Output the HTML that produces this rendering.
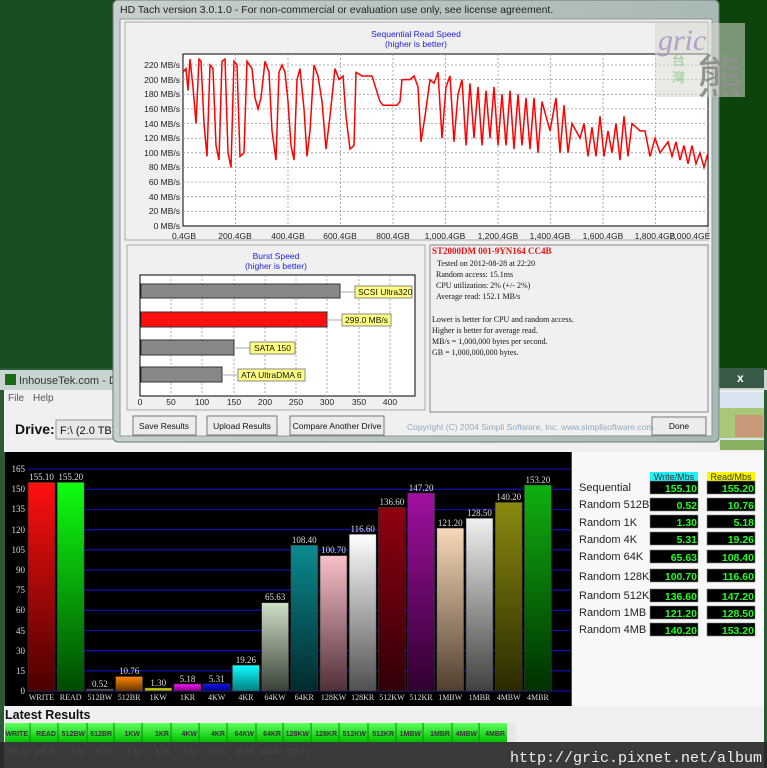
<!DOCTYPE html>
<html><head><meta charset="utf-8"><style>
html,body{margin:0;padding:0;background:#0c440c;}
svg{display:block}
</style></head><body>
<svg width="767" height="768" viewBox="0 0 767 768" xmlns="http://www.w3.org/2000/svg" font-family="Liberation Sans, sans-serif">
<defs>
<linearGradient id="g0" x1="0" y1="0" x2="0" y2="1"><stop offset="0" stop-color="#ff1010"/><stop offset="1" stop-color="#4a0000"/></linearGradient>
<linearGradient id="g1" x1="0" y1="0" x2="0" y2="1"><stop offset="0" stop-color="#10ff10"/><stop offset="1" stop-color="#004a00"/></linearGradient>
<linearGradient id="g2" x1="0" y1="0" x2="0" y2="1"><stop offset="0" stop-color="#777"/><stop offset="1" stop-color="#333"/></linearGradient>
<linearGradient id="g3" x1="0" y1="0" x2="0" y2="1"><stop offset="0" stop-color="#ff8800"/><stop offset="1" stop-color="#663300"/></linearGradient>
<linearGradient id="g4" x1="0" y1="0" x2="0" y2="1"><stop offset="0" stop-color="#ffff00"/><stop offset="1" stop-color="#888800"/></linearGradient>
<linearGradient id="g5" x1="0" y1="0" x2="0" y2="1"><stop offset="0" stop-color="#ff10ff"/><stop offset="1" stop-color="#800080"/></linearGradient>
<linearGradient id="g6" x1="0" y1="0" x2="0" y2="1"><stop offset="0" stop-color="#1010ff"/><stop offset="1" stop-color="#000080"/></linearGradient>
<linearGradient id="g7" x1="0" y1="0" x2="0" y2="1"><stop offset="0" stop-color="#10ffff"/><stop offset="1" stop-color="#008080"/></linearGradient>
<linearGradient id="g8" x1="0" y1="0" x2="0" y2="1"><stop offset="0" stop-color="#d0e0c8"/><stop offset="1" stop-color="#3a4238"/></linearGradient>
<linearGradient id="g9" x1="0" y1="0" x2="0" y2="1"><stop offset="0" stop-color="#0a8a90"/><stop offset="1" stop-color="#022a2c"/></linearGradient>
<linearGradient id="g10" x1="0" y1="0" x2="0" y2="1"><stop offset="0" stop-color="#f8c0c8"/><stop offset="1" stop-color="#503038"/></linearGradient>
<linearGradient id="g11" x1="0" y1="0" x2="0" y2="1"><stop offset="0" stop-color="#ffffff"/><stop offset="1" stop-color="#505050"/></linearGradient>
<linearGradient id="g12" x1="0" y1="0" x2="0" y2="1"><stop offset="0" stop-color="#900010"/><stop offset="1" stop-color="#300008"/></linearGradient>
<linearGradient id="g13" x1="0" y1="0" x2="0" y2="1"><stop offset="0" stop-color="#a010a0"/><stop offset="1" stop-color="#300030"/></linearGradient>
<linearGradient id="g14" x1="0" y1="0" x2="0" y2="1"><stop offset="0" stop-color="#f8d8b8"/><stop offset="1" stop-color="#504030"/></linearGradient>
<linearGradient id="g15" x1="0" y1="0" x2="0" y2="1"><stop offset="0" stop-color="#f0f0f0"/><stop offset="1" stop-color="#404040"/></linearGradient>
<linearGradient id="g16" x1="0" y1="0" x2="0" y2="1"><stop offset="0" stop-color="#8a8a10"/><stop offset="1" stop-color="#2a2a00"/></linearGradient>
<linearGradient id="g17" x1="0" y1="0" x2="0" y2="1"><stop offset="0" stop-color="#10b010"/><stop offset="1" stop-color="#003000"/></linearGradient>
<linearGradient id="tg" x1="0" y1="0" x2="0" y2="1"><stop offset="0" stop-color="#60ff60"/><stop offset="1" stop-color="#00c000"/></linearGradient>
<linearGradient id="frame" x1="0" y1="0" x2="1" y2="0"><stop offset="0" stop-color="#c8d0cc"/><stop offset="1" stop-color="#a8b8b4"/></linearGradient>
</defs>

<rect width="767" height="768" fill="#0c440c"/>
<rect x="0" y="0" width="113" height="370" fill="#184d22"/>

<!-- Inhouse window -->
<rect x="0" y="368" width="767" height="400" fill="#2c5a34"/>
<rect x="0" y="370" width="767" height="20" fill="#c8d4d0"/>
<rect x="718" y="368" width="46" height="20" fill="#3a5a48"/>
<text x="737" y="382" font-size="12" fill="#fff" font-weight="bold">x</text>
<rect x="5" y="374" width="11" height="11" fill="#1a6a1a"/>
<text x="19" y="384" font-size="11" fill="#333">InhouseTek.com - Disk</text>
<rect x="4" y="390" width="760" height="62" fill="#f0f0f0"/>
<text x="8" y="401" font-size="10" fill="#555">File</text>
<text x="33" y="401" font-size="10" fill="#555">Help</text>
<text x="15" y="434" font-size="14" font-weight="bold" fill="#111">Drive:</text>
<rect x="56" y="420" width="70" height="19" fill="#e8e8e8" stroke="#999"/>
<text x="60" y="434" font-size="11" fill="#111">F:\ (2.0 TB)</text>
<rect x="718" y="392" width="46" height="55" fill="#d8e4f0"/>
<rect x="720" y="408" width="44" height="30" fill="#a8c878"/>
<rect x="735" y="415" width="28" height="22" fill="#c89878"/>
<rect x="720" y="440" width="44" height="10" fill="#88b060"/>

<!-- black chart -->
<rect x="5" y="452" width="566" height="254" fill="#000"/>
<g stroke="#1010a0" stroke-width="1.3">
<line x1="28" y1="691" x2="571" y2="691"/><line x1="28" y1="670.8" x2="571" y2="670.8"/><line x1="28" y1="650.7" x2="571" y2="650.7"/><line x1="28" y1="630.5" x2="571" y2="630.5"/><line x1="28" y1="610.3" x2="571" y2="610.3"/><line x1="28" y1="590.2" x2="571" y2="590.2"/><line x1="28" y1="570" x2="571" y2="570"/><line x1="28" y1="549.8" x2="571" y2="549.8"/><line x1="28" y1="529.7" x2="571" y2="529.7"/><line x1="28" y1="509.5" x2="571" y2="509.5"/><line x1="28" y1="489.3" x2="571" y2="489.3"/><line x1="28" y1="469.1" x2="571" y2="469.1"/>
</g>
<g font-size="9" fill="#ddd" text-anchor="end" font-family="Liberation Serif, serif">
<text x="25" y="694">0</text><text x="25" y="674">15</text><text x="25" y="654">30</text><text x="25" y="634">45</text><text x="25" y="613">60</text><text x="25" y="593">75</text><text x="25" y="573">90</text><text x="25" y="553">105</text><text x="25" y="533">120</text><text x="25" y="512">135</text><text x="25" y="492">150</text><text x="25" y="472">165</text>
</g>
<g stroke="#333" stroke-width="0.6">
<rect x="28" y="482.4" width="27" height="208.6" fill="url(#g0)"/>
<rect x="57.2" y="482.3" width="27" height="208.7" fill="url(#g1)"/>
<rect x="86.4" y="689" width="27" height="2" fill="url(#g2)"/>
<rect x="115.6" y="676.5" width="27" height="14.5" fill="url(#g3)"/>
<rect x="144.8" y="688" width="27" height="3" fill="url(#g4)"/>
<rect x="174" y="684" width="27" height="7" fill="url(#g5)"/>
<rect x="203.2" y="683.9" width="27" height="7.1" fill="url(#g6)"/>
<rect x="232.4" y="665.1" width="27" height="25.9" fill="url(#g7)"/>
<rect x="261.6" y="602.7" width="27" height="88.3" fill="url(#g8)"/>
<rect x="290.8" y="545.2" width="27" height="145.8" fill="url(#g9)"/>
<rect x="320" y="555.6" width="27" height="135.4" fill="url(#g10)"/>
<rect x="349.2" y="534.2" width="27" height="156.8" fill="url(#g11)"/>
<rect x="378.4" y="507.3" width="27" height="183.7" fill="url(#g12)"/>
<rect x="407.6" y="493" width="27" height="198" fill="url(#g13)"/>
<rect x="436.8" y="528" width="27" height="163" fill="url(#g14)"/>
<rect x="466" y="518.2" width="27" height="172.8" fill="url(#g15)"/>
<rect x="495.2" y="502.4" width="27" height="188.6" fill="url(#g16)"/>
<rect x="524.4" y="485" width="27" height="206" fill="url(#g17)"/>
</g>
<g font-family="Liberation Serif, serif" font-size="9" fill="#ddd" text-anchor="middle">
<text x="41.5" y="480">155.10</text><text x="70.7" y="480">155.20</text><text x="99.9" y="687">0.52</text><text x="129.1" y="674">10.76</text><text x="158.3" y="686">1.30</text><text x="187.5" y="682">5.18</text><text x="216.7" y="682">5.31</text><text x="245.9" y="663">19.26</text><text x="275.1" y="600">65.63</text><text x="304.3" y="543">108.40</text><text x="333.5" y="553">100.70</text><text x="362.7" y="532">116.60</text><text x="391.9" y="505">136.60</text><text x="421.1" y="491">147.20</text><text x="450.3" y="526">121.20</text><text x="479.5" y="516">128.50</text><text x="508.7" y="500">140.20</text><text x="537.9" y="483">153.20</text>
</g>
<g font-family="Liberation Serif, serif" font-size="8" fill="#ddd" text-anchor="middle">
<text x="41.5" y="700">WRITE</text><text x="70.7" y="700">READ</text><text x="99.9" y="700">512BW</text><text x="129.1" y="700">512BR</text><text x="158.3" y="700">1KW</text><text x="187.5" y="700">1KR</text><text x="216.7" y="700">4KW</text><text x="245.9" y="700">4KR</text><text x="275.1" y="700">64KW</text><text x="304.3" y="700">64KR</text><text x="333.5" y="700">128KW</text><text x="362.7" y="700">128KR</text><text x="391.9" y="700">512KW</text><text x="421.1" y="700">512KR</text><text x="450.3" y="700">1MBW</text><text x="479.5" y="700">1MBR</text><text x="508.7" y="700">4MBW</text><text x="537.9" y="700">4MBR</text>
</g>

<!-- right results panel -->
<rect x="572" y="452" width="192" height="254" fill="#f8f8f8"/>
<rect x="650" y="472" width="48" height="10" fill="#20f0f8"/>
<rect x="707" y="472" width="48" height="10" fill="#f8f800"/>
<text x="674" y="480" font-size="9" fill="#333" text-anchor="middle">Write/Mbs</text>
<text x="731" y="480" font-size="9" fill="#333" text-anchor="middle">Read/Mbs</text>
<g font-size="11" fill="#222">
<text x="579" y="491">Sequential</text><text x="579" y="508">Random 512B</text><text x="579" y="526">Random 1K</text><text x="579" y="543">Random 4K</text><text x="579" y="560">Random 64K</text><text x="579" y="580">Random 128K</text><text x="579" y="599">Random 512K</text><text x="579" y="616">Random 1MB</text><text x="579" y="633">Random 4MB</text>
</g>
<g fill="#000" stroke="#888" stroke-width="0.6">
<rect x="650" y="481" width="48" height="13"/><rect x="707" y="481" width="48" height="13"/>
<rect x="650" y="498" width="48" height="13"/><rect x="707" y="498" width="48" height="13"/>
<rect x="650" y="515" width="48" height="13"/><rect x="707" y="515" width="48" height="13"/>
<rect x="650" y="532" width="48" height="13"/><rect x="707" y="532" width="48" height="13"/>
<rect x="650" y="550" width="48" height="13"/><rect x="707" y="550" width="48" height="13"/>
<rect x="650" y="569" width="48" height="13"/><rect x="707" y="569" width="48" height="13"/>
<rect x="650" y="589" width="48" height="13"/><rect x="707" y="589" width="48" height="13"/>
<rect x="650" y="606" width="48" height="13"/><rect x="707" y="606" width="48" height="13"/>
<rect x="650" y="623" width="48" height="13"/><rect x="707" y="623" width="48" height="13"/>
</g>
<g font-size="10.5" font-weight="bold" fill="#20ff20" text-anchor="end">
<text x="697" y="492">155.10</text><text x="754" y="492">155.20</text>
<text x="697" y="509">0.52</text><text x="754" y="509">10.76</text>
<text x="697" y="526">1.30</text><text x="754" y="526">5.18</text>
<text x="697" y="543">5.31</text><text x="754" y="543">19.26</text>
<text x="697" y="561">65.63</text><text x="754" y="561">108.40</text>
<text x="697" y="580">100.70</text><text x="754" y="580">116.60</text>
<text x="697" y="600">136.60</text><text x="754" y="600">147.20</text>
<text x="697" y="617">121.20</text><text x="754" y="617">128.50</text>
<text x="697" y="634">140.20</text><text x="754" y="634">153.20</text>
</g>

<!-- latest results -->
<rect x="4" y="706" width="760" height="62" fill="#f0f0f0"/>
<text x="5" y="719" font-size="12.5" font-weight="bold" fill="#111">Latest Results</text>
<rect x="5" y="723" width="502" height="19" fill="url(#tg)"/>
<g stroke="#0a8a0a" stroke-width="1"><line x1="30" y1="723" x2="30" y2="742"/><line x1="58" y1="723" x2="58" y2="742"/><line x1="87" y1="723" x2="87" y2="742"/><line x1="114" y1="723" x2="114" y2="742"/><line x1="142" y1="723" x2="142" y2="742"/><line x1="171" y1="723" x2="171" y2="742"/><line x1="199" y1="723" x2="199" y2="742"/><line x1="227" y1="723" x2="227" y2="742"/><line x1="256" y1="723" x2="256" y2="742"/><line x1="283" y1="723" x2="283" y2="742"/><line x1="311" y1="723" x2="311" y2="742"/><line x1="339" y1="723" x2="339" y2="742"/><line x1="368" y1="723" x2="368" y2="742"/><line x1="396" y1="723" x2="396" y2="742"/><line x1="423" y1="723" x2="423" y2="742"/><line x1="452" y1="723" x2="452" y2="742"/><line x1="479" y1="723" x2="479" y2="742"/></g>
<g font-size="7" font-weight="bold" fill="#333" text-anchor="end">
<text x="28" y="736">WRITE</text><text x="56" y="736">READ</text><text x="85" y="736">512BW</text><text x="112" y="736">512BR</text><text x="140" y="736">1KW</text><text x="169" y="736">1KR</text><text x="197" y="736">4KW</text><text x="225" y="736">4KR</text><text x="254" y="736">64KW</text><text x="281" y="736">64KR</text><text x="309" y="736">128KW</text><text x="337" y="736">128KR</text><text x="366" y="736">512KW</text><text x="394" y="736">512KR</text><text x="421" y="736">1MBW</text><text x="450" y="736">1MBR</text><text x="477" y="736">4MBW</text><text x="505" y="736">4MBR</text>
</g>
<rect x="508" y="723" width="8" height="45" fill="#e8e8e8"/>
<rect x="0" y="742" width="767" height="26" fill="#262626" opacity="0.9"/>
<g font-size="7" fill="#4a4a4a" text-anchor="end"><text x="28" y="754">155.10</text><text x="56" y="754">155.20</text><text x="85" y="754">0.52</text><text x="112" y="754">10.76</text><text x="140" y="754">1.30</text><text x="169" y="754">5.18</text><text x="197" y="754">5.31</text><text x="225" y="754">19.26</text><text x="254" y="754">65.63</text><text x="281" y="754">108.40</text><text x="309" y="754">100.70</text></g>
<text x="762" y="762" font-family="Liberation Mono, monospace" font-size="15" fill="#f0f0f0" text-anchor="end">http://gric.pixnet.net/album</text>

<!-- HD Tach window -->
<rect x="113" y="0" width="606" height="442" rx="5" fill="url(#frame)" stroke="#6a7a78"/>
<text x="120" y="13" font-size="10.5" fill="#222">HD Tach version 3.0.1.0  - For non-commercial or evaluation use only, see license agreement.</text>
<rect x="120" y="19" width="592" height="417" fill="#f0f0f0" stroke="#8a9a98"/>
<rect x="125" y="22" width="583" height="218" fill="none" stroke="#aaa"/>
<text x="416" y="37" font-size="8.5" fill="#2020e0" text-anchor="middle">Sequential Read Speed</text>
<text x="416" y="47" font-size="8.5" fill="#2020e0" text-anchor="middle">(higher is better)</text>
<rect x="183" y="54" width="525" height="172" fill="#fff" stroke="#000"/>
<g stroke="#999" stroke-dasharray="2,2" stroke-width="0.8">
<line x1="183" y1="65" x2="708" y2="65"/><line x1="183" y1="79.6" x2="708" y2="79.6"/><line x1="183" y1="94.3" x2="708" y2="94.3"/><line x1="183" y1="108.9" x2="708" y2="108.9"/><line x1="183" y1="123.5" x2="708" y2="123.5"/><line x1="183" y1="138.2" x2="708" y2="138.2"/><line x1="183" y1="152.8" x2="708" y2="152.8"/><line x1="183" y1="167.4" x2="708" y2="167.4"/><line x1="183" y1="182.1" x2="708" y2="182.1"/><line x1="183" y1="196.7" x2="708" y2="196.7"/><line x1="183" y1="211.4" x2="708" y2="211.4"/>
<line x1="235.5" y1="54" x2="235.5" y2="226"/><line x1="288" y1="54" x2="288" y2="226"/><line x1="340.5" y1="54" x2="340.5" y2="226"/><line x1="393" y1="54" x2="393" y2="226"/><line x1="445.5" y1="54" x2="445.5" y2="226"/><line x1="498" y1="54" x2="498" y2="226"/><line x1="550.5" y1="54" x2="550.5" y2="226"/><line x1="603" y1="54" x2="603" y2="226"/><line x1="655.5" y1="54" x2="655.5" y2="226"/>
</g>
<g font-size="8.5" fill="#222" text-anchor="end">
<text x="180" y="68">220 MB/s</text><text x="180" y="83">200 MB/s</text><text x="180" y="97">180 MB/s</text><text x="180" y="112">160 MB/s</text><text x="180" y="127">140 MB/s</text><text x="180" y="141">120 MB/s</text><text x="180" y="156">100 MB/s</text><text x="180" y="170">80 MB/s</text><text x="180" y="185">60 MB/s</text><text x="180" y="200">40 MB/s</text><text x="180" y="214">20 MB/s</text><text x="180" y="229">0 MB/s</text>
</g>
<g font-size="8.5" fill="#222" text-anchor="middle">
<text x="184" y="239">0.4GB</text><text x="235" y="239">200.4GB</text><text x="288" y="239">400.4GB</text><text x="340" y="239">600.4GB</text><text x="393" y="239">800.4GB</text><text x="445" y="239">1,000.4GB</text><text x="498" y="239">1,200.4GB</text><text x="550" y="239">1,400.4GB</text><text x="603" y="239">1,600.4GB</text><text x="655" y="239">1,800.4GB</text><text x="690" y="239">2,000.4GE</text>
</g>
<g transform="translate(0,226) scale(1,-0.732)">
<polyline fill="none" stroke="#ff0000" stroke-width="1.5" vector-effect="non-scaling-stroke" points="183,210 186,215 188,185 190,228 193,190 196,140 199,228 201,225 204,140 207,95 210,220 213,215 216,110 219,90 222,225 225,228 228,100 231,80 234,225 237,220 240,95 244,100 247,225 252,215 255,175 258,160 261,175 265,225 269,210 272,130 276,90 279,210 282,220 285,210 288,170 291,110 294,90 297,200 300,215 304,160 307,95 310,130 314,220 318,205 322,170 326,105 330,150 335,215 339,200 343,205 346,150 350,105 354,110 356,210 362,205 372,205 380,170 383,165 397,165 400,170 402,200 410,200 414,205 418,190 421,115 425,150 430,200 434,195 438,210 442,120 446,190 450,205 454,115 458,180 462,200 466,110 470,195 474,120 478,190 482,110 486,185 490,120 494,190 498,110 502,180 506,110 510,185 514,105 518,180 522,110 526,175 530,105 534,175 538,100 542,170 546,150 550,130 556,175 560,100 564,165 568,100 572,140 580,120 584,140 588,95 592,135 596,95 600,150 604,95 608,130 612,100 616,140 620,90 624,150 628,95 632,140 640,130 645,130 650,95 655,120 660,100 668,115 672,95 676,115 680,90 684,110 688,85 692,110 696,85 700,100 704,80 708,100"/>
</g>

<!-- burst -->
<rect x="127" y="245" width="298" height="165" fill="none" stroke="#aaa"/>
<text x="276" y="259" font-size="8.5" fill="#2020e0" text-anchor="middle">Burst Speed</text>
<text x="276" y="269" font-size="8.5" fill="#2020e0" text-anchor="middle">(higher is better)</text>
<rect x="140" y="275" width="275" height="121" fill="#fff" stroke="#000"/>
<g stroke="#999" stroke-dasharray="2,2" stroke-width="0.8"><line x1="171" y1="275" x2="171" y2="396"/><line x1="202" y1="275" x2="202" y2="396"/><line x1="234" y1="275" x2="234" y2="396"/><line x1="265" y1="275" x2="265" y2="396"/><line x1="296" y1="275" x2="296" y2="396"/><line x1="327" y1="275" x2="327" y2="396"/><line x1="359" y1="275" x2="359" y2="396"/><line x1="390" y1="275" x2="390" y2="396"/></g>
<g stroke="#333"><rect x="141" y="284" width="199" height="14" fill="#888"/><rect x="141" y="312" width="186" height="15" fill="#ff1010"/><rect x="141" y="340" width="93" height="15" fill="#888"/><rect x="141" y="367" width="81" height="15" fill="#888"/></g>
<g stroke="#aaa"><line x1="340" y1="292" x2="355" y2="292"/><line x1="327" y1="320" x2="342" y2="320"/><line x1="234" y1="348" x2="250" y2="348"/><line x1="222" y1="375" x2="237" y2="375"/></g>
<g stroke="#888" fill="#ffff80"><rect x="355" y="286" width="57" height="12"/><rect x="342" y="314" width="49" height="12"/><rect x="250" y="342" width="45" height="12"/><rect x="238" y="369" width="67" height="12"/></g>
<g font-size="8.5" fill="#111"><text x="358" y="295">SCSI Ultra320</text><text x="345" y="323">299.0 MB/s</text><text x="254" y="351">SATA 150</text><text x="241" y="378">ATA UltraDMA 6</text></g>
<g font-size="8.5" fill="#222" text-anchor="middle"><text x="140" y="405">0</text><text x="171" y="405">50</text><text x="202" y="405">100</text><text x="234" y="405">150</text><text x="265" y="405">200</text><text x="296" y="405">250</text><text x="327" y="405">300</text><text x="359" y="405">350</text><text x="390" y="405">400</text></g>

<!-- info -->
<rect x="430" y="245" width="278" height="167" fill="#f0f0f0" stroke="#888"/>
<text x="432" y="254" font-family="Liberation Serif, serif" font-size="9" font-weight="bold" fill="#f01010">ST2000DM 001-9YN164 CC4B</text>
<g font-family="Liberation Serif, serif" font-size="8" fill="#111">
<text x="437" y="266">Tested on 2012-08-28 at 22:20</text><text x="436" y="277">Random access: 15.1ms</text><text x="436" y="288">CPU utilization: 2% (+/- 2%)</text><text x="436" y="299">Average read: 152.1 MB/s</text>
<text x="432" y="322">Lower is better for CPU and random access.</text><text x="432" y="333">Higher is better for average read.</text><text x="432" y="344">MB/s = 1,000,000 bytes per second.</text><text x="432" y="355">GB = 1,000,000,000 bytes.</text>
</g>
<g fill="#ececec" stroke="#777"><rect x="133" y="416" width="63" height="19"/><rect x="207" y="416" width="70" height="19"/><rect x="290" y="416" width="94" height="19"/><rect x="652" y="417" width="54" height="18"/></g>
<g font-size="8.5" fill="#111" text-anchor="middle"><text x="164" y="429">Save Results</text><text x="242" y="429">Upload Results</text><text x="337" y="429">Compare Another Drive</text><text x="679" y="429">Done</text></g>
<text x="407" y="430" font-size="8.5" fill="#90a8c0">Copyright (C) 2004 Simpli Software, Inc. www.simplisoftware.com</text>

<!-- logo -->
<rect x="655" y="23" width="90" height="74" fill="#d8d8d0" opacity="0.55"/>
<text x="658" y="50" font-family="Liberation Serif, serif" font-style="italic" font-size="30" fill="#b0a0c8">gric</text>
<text x="672" y="65" font-family="Noto Sans CJK TC, sans-serif" font-size="13" fill="#90c890">台</text>
<text x="672" y="82" font-family="Noto Sans CJK TC, sans-serif" font-size="13" fill="#90c890">灣</text>
<text x="697" y="93" font-family="Noto Sans CJK TC, sans-serif" font-size="46" fill="#909090">熊</text>
</svg>
</body></html>
